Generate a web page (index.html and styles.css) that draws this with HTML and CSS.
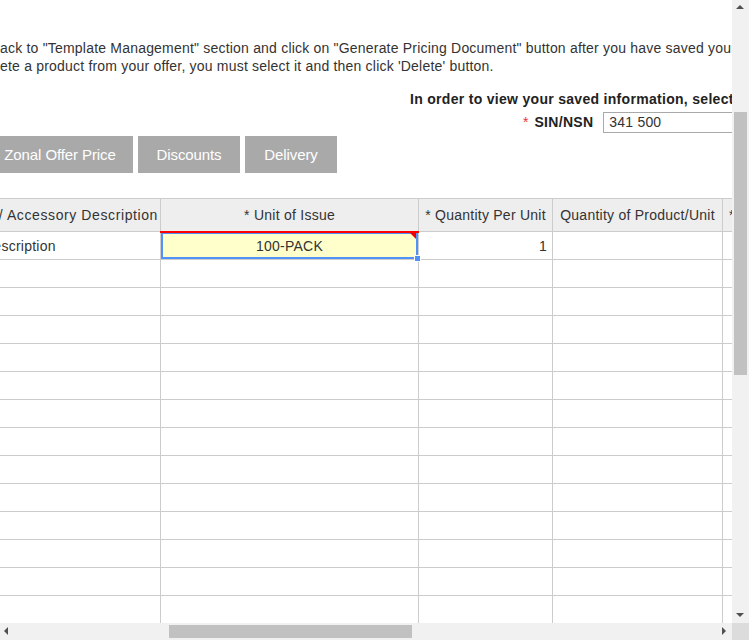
FILE: index.html
```html
<!DOCTYPE html>
<html>
<head>
<meta charset="utf-8">
<link rel="stylesheet" href="styles.css">
</head>
<body>
<div class="frame">
  <div class="view">
    <div class="page">
      <p class="note">ack to "Template Management" section and click on "Generate Pricing Document" button after you have saved your information.<br>ete a product from your offer, you must select it and then click 'Delete' button.</p>
      <div class="select-box">
        <div class="select-title">In order to view your saved information, select a SIN</div>
        <div class="select-row">
          <span class="req">*</span>
          <span class="select-label">SIN/NSN</span>
          <input class="select-input" type="text" value="341 500">
        </div>
      </div>
      <div class="tabs">
        <span class="tab tab-zonal">Zonal Offer Price</span>
        <span class="tab tab-disc">Discounts</span>
        <span class="tab tab-deliv">Delivery</span>
      </div>
      <table class="grid">
        <colgroup>
          <col class="c1"><col class="c2"><col class="c3"><col class="c4"><col class="c5">
        </colgroup>
        <thead>
          <tr>
            <th><div class="endalign">Product / Accessory Description</div></th>
            <th>* Unit of Issue</th>
            <th>* Quantity Per Unit</th>
            <th>Quantity of Product/Unit</th>
            <th class="lft">* Price</th>
          </tr>
        </thead>
        <tbody>
          <tr>
            <td class="lft">Description</td>
            <td class="sel"><span class="redline"></span><span class="flag"></span><span class="handle"></span>100-PACK</td>
            <td class="num">1</td>
            <td></td>
            <td></td>
          </tr>
          <tr><td></td><td></td><td></td><td></td><td></td></tr>
          <tr><td></td><td></td><td></td><td></td><td></td></tr>
          <tr><td></td><td></td><td></td><td></td><td></td></tr>
          <tr><td></td><td></td><td></td><td></td><td></td></tr>
          <tr><td></td><td></td><td></td><td></td><td></td></tr>
          <tr><td></td><td></td><td></td><td></td><td></td></tr>
          <tr><td></td><td></td><td></td><td></td><td></td></tr>
          <tr><td></td><td></td><td></td><td></td><td></td></tr>
          <tr><td></td><td></td><td></td><td></td><td></td></tr>
          <tr><td></td><td></td><td></td><td></td><td></td></tr>
          <tr><td></td><td></td><td></td><td></td><td></td></tr>
          <tr><td></td><td></td><td></td><td></td><td></td></tr>
          <tr><td></td><td></td><td></td><td></td><td></td></tr>
          <tr><td></td><td></td><td></td><td></td><td></td></tr>
        </tbody>
      </table>
    </div>
  </div>
  <div class="vbar">
    <span class="arrow up"></span>
    <div class="vtrack"><div class="vthumb"></div></div>
    <span class="arrow down"></span>
  </div>
  <div class="hbar">
    <span class="arrow left"></span>
    <div class="htrack"><div class="hthumb"></div></div>
    <span class="arrow right"></span>
  </div>
  <div class="corner"></div>
</div>
</body>
</html>
```

FILE: styles.css
```css
html, body {
  margin: 0;
  padding: 0;
  background: #fff;
  overflow: hidden;
}
.frame {
  width: 749px;
  height: 640px;
  display: grid;
  grid-template-columns: 732px 17px;
  grid-template-rows: 623px 17px;
  font-family: "Liberation Sans", Arial, sans-serif;
  color: #333;
}
.view {
  overflow: hidden;
  position: relative;
}
.page {
  width: 1100px;
  padding-top: 39px;
}
.note {
  margin: 0;
  font-size: 14px;
  line-height: 18px;
  letter-spacing: 0.2px;
  white-space: nowrap;
}
.select-box {
  margin-top: 16px;
  margin-left: 410px;
  white-space: nowrap;
}
.select-title {
  font-size: 14px;
  font-weight: bold;
  color: #222;
  line-height: 17px;
  letter-spacing: 0.3px;
}
.select-row {
  display: flex;
  align-items: center;
  margin-top: 3px;
  margin-left: 113px;
  height: 22px;
}
.req {
  color: #e33;
  font-size: 14px;
  margin-right: 6px;
}
.select-label {
  font-size: 14px;
  font-weight: bold;
  color: #222;
  letter-spacing: 0.3px;
  margin-right: 10px;
}
.select-input {
  width: 200px;
  height: 21px;
  box-sizing: border-box;
  border: 1px solid #a9a9a9;
  padding: 0 5px;
  font-family: "Liberation Sans", Arial, sans-serif;
  font-size: 14px;
  letter-spacing: 0.2px;
  color: #333;
  margin: 0;
}
.tabs {
  display: flex;
  gap: 5px;
  margin-top: 3px;
  margin-left: -13px;
  height: 37px;
}
.tab {
  display: flex;
  align-items: center;
  justify-content: center;
  background: #a9a9a9;
  color: #fff;
  font-size: 15px;
  letter-spacing: -0.1px;
  white-space: nowrap;
}
.tab-zonal { width: 146px; }
.tab-disc { width: 102px; }
.tab-deliv { width: 92px; }
.grid {
  margin-top: 25px;
  margin-left: -22px;
  border-collapse: collapse;
  table-layout: fixed;
  width: 940px;
  font-size: 14px;
  letter-spacing: 0.25px;
}
.c1 { width: 182px; }
.c2 { width: 258px; }
.c3 { width: 134px; }
.c4 { width: 170px; }
.c5 { width: 196px; }
.grid th {
  background: #eee;
  font-weight: normal;
  color: #333;
  height: 32px;
  padding: 0 4px;
  border: 1px solid #ccc;
  white-space: nowrap;
  overflow: hidden;
  text-align: center;
}
.grid th.lft {
  text-align: left;
  padding-left: 6px;
}
.endalign {
  display: flex;
  justify-content: flex-end;
  white-space: nowrap;
  margin-right: -2px;
  letter-spacing: 0.6px;
}
.grid td {
  height: 27px;
  padding: 0 4px;
  border: 1px solid #ccc;
  white-space: nowrap;
  overflow: hidden;
  text-align: center;
}
.grid td.lft {
  text-align: left;
}
.grid td.num {
  text-align: right;
  padding-right: 5px;
}
.grid td.sel {
  position: relative;
  background: #ffffcc;
  box-shadow: inset 0 0 0 2px #5292f7;
  overflow: visible;
}
.redline {
  position: absolute;
  left: -1px;
  right: -1px;
  top: -1px;
  height: 2px;
  background: #f00;
}
.flag {
  position: absolute;
  right: 2px;
  top: 1px;
  width: 0;
  height: 0;
  border-top: 6px solid #e00;
  border-left: 6px solid transparent;
}
.handle {
  position: absolute;
  right: -3px;
  bottom: -3px;
  width: 5px;
  height: 5px;
  background: #5292f7;
  border: 1px solid #fff;
  box-sizing: content-box;
}
.vbar {
  background: #f1f1f1;
  display: flex;
  flex-direction: column;
  align-items: center;
}
.vtrack {
  flex: 1;
  width: 100%;
  position: relative;
}
.vthumb {
  position: absolute;
  left: 2px;
  right: 2px;
  top: 95px;
  height: 263px;
  background: #c1c1c1;
}
.hbar {
  background: #f1f1f1;
  display: flex;
  align-items: center;
}
.htrack {
  flex: 1;
  height: 100%;
  position: relative;
}
.hthumb {
  position: absolute;
  top: 2px;
  bottom: 2px;
  left: 152px;
  width: 243px;
  background: #c1c1c1;
}
.corner {
  background: #dcdcdc;
}
.arrow {
  width: 17px;
  height: 17px;
  flex: none;
  position: relative;
}
.arrow::after {
  content: "";
  position: absolute;
  width: 0;
  height: 0;
}
.arrow.up::after {
  left: 4px;
  top: 5px;
  border-left: 4px solid transparent;
  border-right: 4px solid transparent;
  border-bottom: 4px solid #505050;
}
.arrow.down::after {
  left: 4px;
  top: 7px;
  border-left: 4px solid transparent;
  border-right: 4px solid transparent;
  border-top: 4px solid #505050;
}
.arrow.left::after {
  left: 4px;
  top: 4px;
  border-top: 4px solid transparent;
  border-bottom: 4px solid transparent;
  border-right: 4px solid #505050;
}
.arrow.right::after {
  left: 7px;
  top: 4px;
  border-top: 4px solid transparent;
  border-bottom: 4px solid transparent;
  border-left: 4px solid #505050;
}
```
